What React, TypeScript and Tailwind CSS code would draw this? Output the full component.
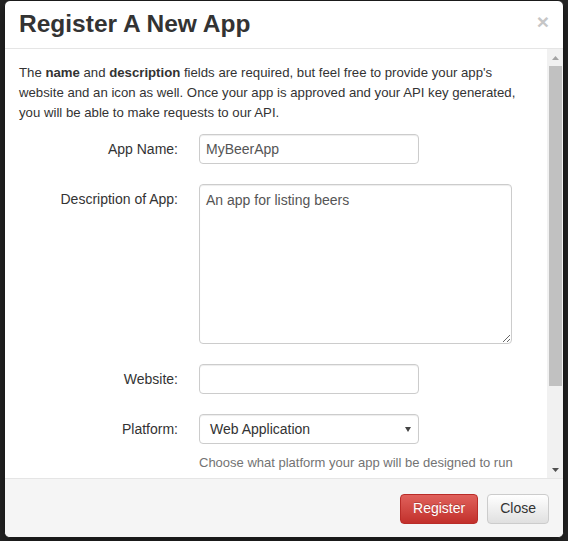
import React from 'react';

const FONT = { fontFamily: '"Liberation Sans", Arial, sans-serif' };

function FormRow({ label, children }: { label: string; children: React.ReactNode }) {
  return (
    <div className="flex items-start">
      <label className="w-[159px] shrink-0 pt-[5px] text-right text-[14px] leading-[20px] text-[#333]">{label}</label>
      <div className="ml-[21px] min-w-0 flex-1">{children}</div>
    </div>
  );
}

function TextInput({ value }: { value: string }) {
  return (
    <input
      readOnly
      value={value}
      className="block h-[30px] w-[220px] rounded-[4px] border border-[#ccc] bg-white px-[6px] text-[14px] text-[#555] shadow-[inset_0_1px_1px_rgba(0,0,0,0.075)] outline-none"
    />
  );
}

function Scrollbar() {
  return (
    <div className="flex w-[16px] shrink-0 flex-col items-center bg-[#f1f1f1]">
      <div className="flex h-[17px] w-full items-center justify-center">
        <svg width="7" height="4" viewBox="0 0 7 4">
          <path d="M3.5 0 L7 4 L0 4 Z" fill="#a3a3a3" />
        </svg>
      </div>
      <div className="h-[320px] w-[13px] bg-[#c1c1c1]" />
      <div className="flex-1" />
      <div className="flex h-[17px] w-full items-center justify-center">
        <svg width="7" height="4" viewBox="0 0 7 4">
          <path d="M0 0 L7 0 L3.5 4 Z" fill="#505050" />
        </svg>
      </div>
    </div>
  );
}

export default function App() {
  return (
    <div className="h-[541px] w-[568px] overflow-hidden bg-[#262626]" style={FONT}>
      <div className="ml-[4px] flex h-[538px] w-[560px] flex-col overflow-hidden rounded-[6px] border border-[#1a1a1a] bg-white shadow-[0_5px_15px_rgba(0,0,0,0.5)]">
        {/* header */}
        <div className="flex h-[48px] shrink-0 items-center justify-between border-b border-[#e5e5e5] pl-[14px] pr-[14px]">
          <h3 className="text-[24.5px] font-bold leading-[1.1] text-[#333]">Register A New App</h3>
          <span className="-mt-[7px] text-[21px] font-bold leading-none text-[#c6c6c6]">×</span>
        </div>

        {/* body, scrolled to the top */}
        <div className="flex min-h-0 flex-1">
          <div className="min-w-0 flex-1 overflow-hidden px-[14px] pt-[14px]">
            <p className="w-[508px] text-[13.2px] leading-[20px] text-[#333]">
              The <b>name</b> and <b>description</b> fields are required, but feel free to provide your app's website and an icon as well. Once your app is approved and your API key generated, you will be able to make requests to our API.
            </p>
            <div className="mt-[11px] flex flex-col gap-[20px]">
              <FormRow label="App Name:">
                <TextInput value="MyBeerApp" />
              </FormRow>
              <FormRow label="Description of App:">
                <textarea
                  readOnly
                  value="An app for listing beers"
                  className="block h-[160px] w-[313px] rounded-[4px] border border-[#ccc] bg-white px-[6px] py-[5px] text-[14px] leading-[20px] text-[#555] shadow-[inset_0_1px_1px_rgba(0,0,0,0.075)] outline-none"
                />
              </FormRow>
              <FormRow label="Website:">
                <TextInput value="" />
              </FormRow>
              <FormRow label="Platform:">
                <div className="flex h-[30px] w-[220px] items-center justify-between rounded-[4px] border border-[#ccc] bg-white pl-[10px] pr-[7px] text-[14px] text-[#333] shadow-[inset_0_1px_1px_rgba(0,0,0,0.075)]">
                  <span>Web Application</span>
                  <svg width="6" height="5" viewBox="0 0 6 5">
                    <path d="M0 0 L6 0 L3 5 Z" fill="#444" />
                  </svg>
                </div>
                <p className="mt-[9px] w-[320px] text-[13px] leading-[20px] text-[#737373]">
                  Choose what platform your app will be designed to run
                </p>
              </FormRow>
            </div>
          </div>
          <Scrollbar />
        </div>

        {/* footer */}
        <div className="flex h-[59px] shrink-0 items-center justify-end gap-[9px] border-t border-[#e5e5e5] bg-[#f5f5f5] pr-[14px] pt-[1px]">
          <button className="h-[30px] rounded-[4px] border border-[#b92c28] bg-gradient-to-b from-[#e0605b] to-[#c22f2b] px-[12px] text-[14px] text-white [text-shadow:0_-1px_0_rgba(0,0,0,0.2)]">
            Register
          </button>
          <button className="h-[30px] rounded-[4px] border border-[#ccc] bg-gradient-to-b from-white to-[#e0e0e0] px-[12px] text-[14px] text-[#333]">
            Close
          </button>
        </div>
      </div>
    </div>
  );
}
